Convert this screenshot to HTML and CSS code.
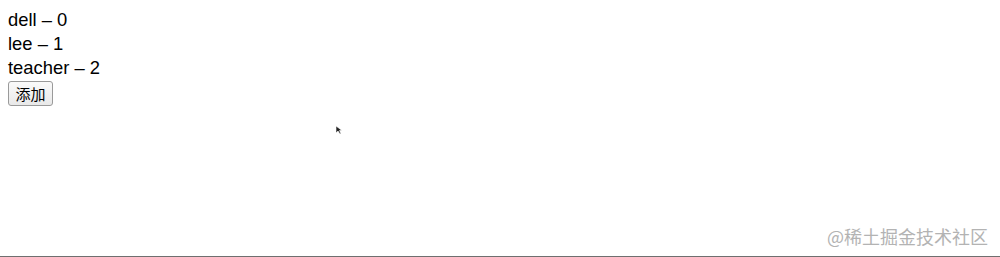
FILE: index.html
```html
<!DOCTYPE html>
<html>
<head>
<meta charset="utf-8">
<link rel="stylesheet" href="styles.css">
</head>
<body>
<div class="frame">
  <div class="app">
    <div class="item">dell – 0</div>
    <div class="item">lee – 1</div>
    <div class="item">teacher – 2</div>
    <button class="btn">添加</button>
  </div>
  <svg class="cursor" width="8" height="10" viewBox="0 0 8 10"><path d="M1 1 L1 8 L3 6 L5 9 L6 8.5 L4.5 5.5 L7 5.5 Z" fill="#222" stroke="#fff" stroke-width="0.6"/></svg>
  <div class="watermark">@稀土掘金技术社区</div>
</div>
</body>
</html>
```
FILE: styles.css
```css
html, body {
  margin: 0;
  padding: 0;
  background: #fff;
}
.frame {
  position: relative;
  width: 1000px;
  height: 257px;
  box-sizing: border-box;
  border-bottom: 1px solid #6f6f6f;
  overflow: hidden;
}
.app {
  padding: 8px 8px 0 8px;
  font-family: "Liberation Sans", Arial, sans-serif;
  font-size: 18.4px;
  color: #000;
}
.item {
  line-height: 24px;
  height: 24px;
}
.btn {
  margin-top: 1px;
  width: 45px;
  height: 25px;
  padding: 0;
  font-family: "Noto Sans CJK SC", sans-serif;
  font-size: 15px;
  line-height: 23px;
  color: #000;
  background: linear-gradient(#fafafa, #e9e9e9);
  border: 1px solid #9a9a9a;
  border-radius: 3px;
}
.cursor {
  position: absolute;
  left: 335px;
  top: 125px;
}
.watermark {
  position: absolute;
  right: 12px;
  top: 224px;
  font-family: "Noto Sans CJK SC", sans-serif;
  font-size: 18px;
  line-height: 24px;
  color: #b3b3b3;
  letter-spacing: 0;
}
```
